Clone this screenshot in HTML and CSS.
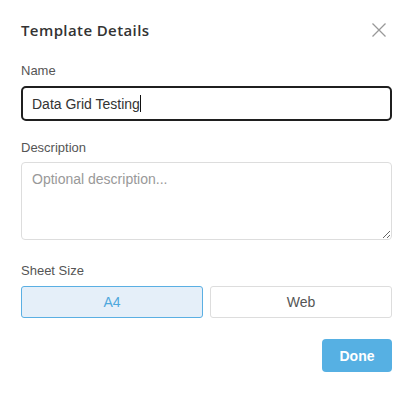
FILE: index.html
```html
<!DOCTYPE html>
<html lang="en">
<head>
    <meta charset="UTF-8">
    <meta name="viewport" content="width=device-width, initial-scale=1.0">
    <title>Template Details</title>
    <link rel="stylesheet" href="styles.css">
</head>
<body>
    <div class="dialog">
        <div class="dialog-header">
            <h2>Template Details</h2>
            <button class="close-btn" aria-label="Close">
                <svg width="16" height="16" viewBox="0 0 16 16">
                    <path d="M1.5 1.5 L14.5 14.5 M14.5 1.5 L1.5 14.5" stroke="#999" stroke-width="1.3" fill="none"/>
                </svg>
            </button>
        </div>

        <div class="form-group">
            <label for="name">Name</label>
            <div class="input focused">Data Grid Testing<span class="caret"></span></div>
        </div>

        <div class="form-group group-description">
            <label for="description">Description</label>
            <textarea id="description" placeholder="Optional description..."></textarea>
        </div>

        <div class="form-group group-size">
            <label>Sheet Size</label>
            <div class="size-options">
                <button class="size-option active">A4</button>
                <button class="size-option">Web</button>
            </div>
        </div>

        <div class="dialog-footer">
            <button class="done-btn">Done</button>
        </div>
    </div>
</body>
</html>
```

FILE: styles.css
```css
body {
    margin: 0;
    background: #fff;
    font-family: "Liberation Sans", Arial, sans-serif;
}
.dialog {
    padding: 18px 23px 20px 21px;
}
.dialog-header {
    display: flex;
    justify-content: space-between;
    align-items: center;
    height: 24px;
    margin-bottom: 21px;
}
h2 {
    margin: 0;
    font-family: "Open Sans", sans-serif;
    font-size: 15px;
    font-weight: 600;
    letter-spacing: 0.4px;
    color: #333;
}
.close-btn {
    background: none;
    border: none;
    padding: 0;
    margin-right: 5px;
    width: 16px;
    height: 16px;
    cursor: pointer;
}
.close-btn svg {
    display: block;
}
.form-group {
    display: flex;
    flex-direction: column;
    gap: 6px;
    margin-bottom: 19px;
}
.group-description {
    margin-bottom: 23px;
}
.group-size {
    margin-bottom: 21px;
}
label {
    display: block;
    font-size: 13px;
    color: #555;
    line-height: 16px;
}
.input {
    box-sizing: border-box;
    height: 35px;
    margin-top: 1px;
    border: 2px solid #1f1f1f;
    border-radius: 5px;
    padding: 0 9px;
    font-size: 14px;
    color: #333;
    display: flex;
    align-items: center;
}
.caret {
    display: inline-block;
    width: 1px;
    height: 17px;
    background: #111;
}
textarea {
    display: block;
    box-sizing: border-box;
    width: 100%;
    height: 78px;
    border: 1px solid #ddd;
    border-radius: 4px;
    padding: 8px 10px;
    font-family: "Liberation Sans", Arial, sans-serif;
    font-size: 14px;
    color: #333;
    resize: vertical;
}
textarea::placeholder {
    color: #999;
}
.size-options {
    display: grid;
    grid-template-columns: 1fr 1fr;
    gap: 7px;
    margin-top: 1px;
}
.size-option {
    height: 32px;
    background: #fff;
    border: 1px solid #ddd;
    border-radius: 3px;
    font-family: "Liberation Sans", Arial, sans-serif;
    font-size: 14px;
    color: #555;
    cursor: pointer;
}
.size-option.active {
    background: #e5eff9;
    border-color: #5aafe3;
    color: #4ea8dd;
}
.dialog-footer {
    display: flex;
    justify-content: flex-end;
}
.done-btn {
    width: 70px;
    height: 33px;
    background: #56b0e3;
    border: none;
    border-radius: 4px;
    color: #fff;
    font-family: "Liberation Sans", Arial, sans-serif;
    font-size: 14px;
    font-weight: 700;
    cursor: pointer;
}
```
